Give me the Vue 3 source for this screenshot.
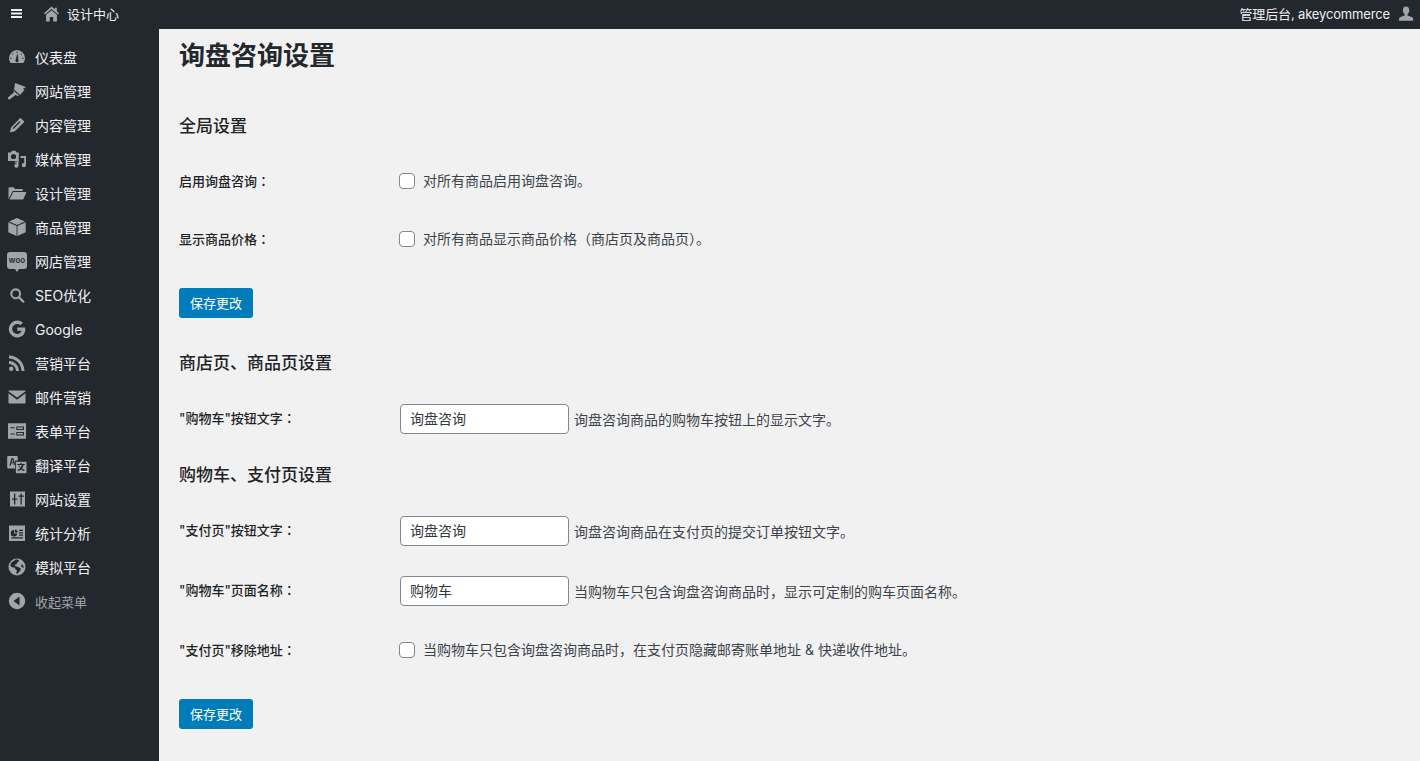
<script setup>
const menu = [
  { t: '仪表盘', k: 'gauge' }, { t: '网站管理', k: 'brush' }, { t: '内容管理', k: 'pencil' },
  { t: '媒体管理', k: 'media' }, { t: '设计管理', k: 'folder' }, { t: '商品管理', k: 'box' },
  { t: '网店管理', k: 'woo' }, { t: 'SEO优化', k: 'search' }, { t: 'Google', k: 'google' },
  { t: '营销平台', k: 'rss' }, { t: '邮件营销', k: 'mail' }, { t: '表单平台', k: 'form' },
  { t: '翻译平台', k: 'translate' }, { t: '网站设置', k: 'sliders' }, { t: '统计分析', k: 'chart' },
  { t: '模拟平台', k: 'globe' }
]
const paths = {
  gauge: 'M10 3a8.200 8.200 0 0 0-8 8.300c0 1.900.6 3.400 1.700 4.800h12.600a8 8 0 0 0 1.700-4.800A8.200 8.200 0 0 0 10 3zM10 4.600a.7.700 0 1 1 0 1.400.7.700 0 0 1 0-1.400zM5.700 6.400a.7.700 0 1 1 0 1.400.7.700 0 0 1 0-1.400zM14.300 6.400a.7.700 0 1 1 0 1.400.7.700 0 0 1 0-1.400zM4 10.600a.7.700 0 1 1 0 1.400.7.700 0 0 1 0-1.400zM16 10.600a.7.700 0 1 1 0 1.400.7.700 0 0 1 0-1.400zM10.800 7.500l.6 5.400a1.600 1.600 0 1 1-2.800 0l1.400-5.400z',
  brush: 'M8 2l11 4-3 2 1.500 1L13 14 7 8.500zM6.300 9.500l5.700 5-1.500.5-2-1-5.500 4.300c-1 .5-1.800.2-2-.8-.2-.9.500-1.500 1-2l4.800-4z',
  pencil: 'M13.900 3.200l2.900 2.800c.4.400.4 1 0 1.400L7.900 16.300l-4.900 1.200 1-5.100 8.900-9.200c.3-.3.700-.3 1 0zM12.600 6l-6.900 7 .9.900 6.900-7z',
  media: 'M1 3.500h3l1-1.700h3.500l1 1.700h2.300v8.500H1zM6.500 4.900a2.600 2.600 0 1 0 0 5.200 2.600 2.600 0 0 0 0-5.200zM13.500 7h5.500v9.200a2.100 2.100 0 1 1-1.800-2.100V9h-3.700zM7.800 12.800l3.700-.7v4.600a2.100 2.100 0 1 1-1.800-2.100v-1.100l-1.900.4z',
  folder: 'M1.500 16.500V5.200c0-.5.400-.9.900-.9h4.200l1.400 1.700h7c.5 0 .8.400.8.800V8H6.400c-.5 0-.9.300-1.100.7zM6.200 9h12.500c.4 0 .6.400.5.700L16.500 16c-.1.300-.4.500-.7.500H2.500z',
  box: 'M10 1l7.900 3.600L10 8 2.100 4.600zM1.300 5.300l8.300 3.600v10l-8.300-3.700zM18.700 5.300v9.900l-8.300 3.700v-10z',
  search: 'M8.700 3.300a5.500 5.500 0 0 1 4.500 8.600l3.900 3.900c.5.500.5 1.200 0 1.600-.4.400-1.100.4-1.600 0l-3.900-3.900a5.500 5.500 0 1 1-2.900-10.200zm0 2.100a3.400 3.400 0 1 0 0 6.800 3.400 3.400 0 0 0 0-6.800z',
  google: 'M10.200 8.500h7.900c.1.500.2 1 .2 1.700 0 4.800-3.200 8.200-8.100 8.200a8.400 8.400 0 1 1 5.700-14.600l-2.400 2.300A5 5 0 0 0 10.200 5a5 5 0 0 0 0 10c2.500 0 3.900-1.400 4.400-3.300h-4.400z',
  rss: 'M2 2.600c8.400 0 15.500 7 15.500 15.400h-3C14.500 11.200 8.800 5.500 2 5.500zM2 8c5.500 0 10 4.500 10 10H9c0-3.900-3.200-7-7-7zM4.200 13.600a2.200 2.200 0 1 1 0 4.400 2.200 2.200 0 0 1 0-4.400z',
  mail: 'M2.200 3.500h15.600c.6 0 .9.600.5 1L10 10.600 1.700 4.500c-.4-.4-.1-1 .5-1zM1.500 6.300L10 12.700l8.500-6.400v9.200c0 .6-.4 1-1 1h-15c-.6 0-1-.4-1-1z',
  form: 'M1 2.300h18v15.400H1zM3.300 6.200v1.100h4.500V6.200zM9.300 5.400v3.700h7.700V5.400zM10.300 6.400h5.600v1.700h-5.600zM3.300 12.400v1.100h4.500v-1.100zM9.300 10.900v3.700h7.700v-3.700zM10.300 11.900h5.600v1.700h-5.600z',
  sliders: 'M3 2.500h15v15H3zM7 4.500v5H5v1.300h2v4.700h1.300v-4.700h2V9.500h-2v-5zM13.500 4.500v2h-2v1.300h2v7.700h1.300V7.800h2V6.500h-2v-2z',
  chart: 'M2 2.500h16v15.500H2zM7 7a3.200 3.200 0 1 0 3.200 3.400H7zM7.800 6.600v3h3a3.200 3.200 0 0 0-3-3zM12 6.800h4v1.200h-4zM12 9.200h4v1.200h-4zM4.500 14.300h11.500v1.200H4.500zM12 11.600h4v1.200h-4z',
  globe: 'M10 1.500a8.500 8.500 0 1 1 0 17 8.500 8.500 0 0 1 0-17zM6.500 4.200L4 5.800 3.300 9l2.500 1.400 2 .2.600 1.700 1.600 1.100-.9 3 1.500.4 2.800-3.300.3-2.200-2.700-1.400-2.800-.8-.4-1.500 1.800-.4.700-1.900 1.200-.3.300-1.900-2.700-.8zM15.600 7.400l-1.700.6.800 2.100 2 .8c0-1.300-.4-2.500-1.100-3.500z',
  collapse: 'M10 1.800a8.200 8.200 0 1 1 0 16.400 8.200 8.200 0 0 1 0-16.400zM12.500 5.500L6.500 10l6 4.500z'
}
const sections = [
  {
    title: '全局设置',
    cls: 'first',
    save: true,
    rows: [
      { label: '启用询盘咨询', text: '对所有商品启用询盘咨询。' },
      { label: '显示商品价格', text: '对所有商品显示商品价格（商店页及商品页）。' }
    ]
  },
  {
    title: '商店页、商品页设置',
    rows: [{ label: '"购物车"按钮文字', value: '询盘咨询', text: '询盘咨询商品的购物车按钮上的显示文字。' }]
  },
  {
    title: '购物车、支付页设置',
    save: true,
    rows: [
      { label: '"支付页"按钮文字', value: '询盘咨询', text: '询盘咨询商品在支付页的提交订单按钮文字。' },
      { label: '"购物车"页面名称', value: '购物车', text: '当购物车只包含询盘咨询商品时，显示可定制的购车页面名称。' },
      { label: '"支付页"移除地址', text: '当购物车只包含询盘咨询商品时，在支付页隐藏邮寄账单地址 & 快递收件地址。' }
    ]
  }
]
</script>

<template>
  <div class="page">
    <header class="topbar">
      <div class="top-left">
        <svg class="burger" viewBox="0 0 11 9"><path d="M0 0h11v2H0zM0 3.500h11v2H0zM0 7h11v2H0z" /></svg>
        <svg class="home" viewBox="0 0 16 16"><path d="M8 0l3.500 3V1.200h2.200V5L16 7.200l-1.100 1.200L8 2.600 1.100 8.400 0 7.200zM8 4l5.800 4.900v7H9.800v-4.600H6.200v4.600H2.200v-7z" /></svg>
        <span class="site">设计中心</span>
      </div>
      <div class="top-right">
        <span class="who">管理后台, akeycommerce</span>
        <svg class="user" viewBox="0 0 16 16"><path d="M8 .6c2 0 3.300 1.500 3.300 3.600 0 1.600-.8 3.200-1.700 3.900v1.300c1.700.6 5 1.500 5.400 2.700.2.700.2 2.300.2 2.700H1c0-.4 0-2 .2-2.700.4-1.200 3.700-2.100 5.400-2.700V8.100c-.9-.7-1.700-2.300-1.700-3.900C4.900 2.100 6 .6 8 .6z" /></svg>
      </div>
    </header>
    <div class="body">
      <aside class="sidebar">
        <nav class="menu">
          <a v-for="m in menu" :key="m.t" class="item">
            <span v-if="m.k === 'woo'" class="woo">woo</span>
            <svg v-else-if="m.k === 'translate'" class="icon" viewBox="0 0 20 20">
              <path d="M1.500 1h8c.8 0 1.300.5 1.300 1.300v10c0 .8-.5 1.300-1.300 1.300h-8C.7 13.600.2 13.100.2 12.300v-10C.2 1.500.7 1 1.500 1z" />
              <path class="cut" d="M2.300 10.500L4.500 3h1.800l2 7H6.900l-.4-1.700H4.300l-.5 2.200zM4.600 7.200h1.600l-.8-2.900z" />
              <path class="cut" d="M8 5.500h12v14H8z" />
              <path d="M9.800 6.700h8.700c.6 0 1 .4 1 1v9.600c0 .6-.4 1-1 1H9.800c-.6 0-1-.4-1-1V7.700c0-.6.400-1 1-1z" />
              <path class="cut" d="M13.500 8h1.300v1h3v1h-1.200c-.3 1.600-.9 2.700-1.700 3.600.8.600 1.700 1 2.800 1.200l-.5 1.100c-1.300-.3-2.300-.8-3.100-1.500-.9.700-1.900 1.200-3.100 1.500l-.5-1.100c1-.2 2-.6 2.700-1.200-.8-.9-1.400-2-1.700-3.600h-1.200V9h3zM12 10c.3 1.200.7 2 1.400 2.800.6-.8 1.100-1.600 1.400-2.800z" />
            </svg>
            <svg v-else class="icon" viewBox="0 0 20 20"><path fill-rule="evenodd" :d="paths[m.k]" /></svg>
            <span>{{ m.t }}</span>
          </a>
          <a class="item collapse">
            <svg class="icon" viewBox="0 0 20 20"><path fill-rule="evenodd" :d="paths.collapse" /></svg>
            <span>收起菜单</span>
          </a>
        </nav>
      </aside>
      <main class="main">
        <h1>询盘咨询设置</h1>
        <section v-for="s in sections" :key="s.title" :class="s.cls">
          <h2>{{ s.title }}</h2>
          <div v-for="r in s.rows" :key="r.label" class="row" :class="{ 'has-input': r.value }">
            <label class="label">{{ r.label }}<span class="colon">：</span></label>
            <div class="control">
              <input v-if="r.value" class="text" type="text" :value="r.value" />
              <input v-else class="check" type="checkbox" />
              <span class="desc">{{ r.text }}</span>
            </div>
          </div>
          <button v-if="s.save" class="save" type="button">保存更改</button>
        </section>
      </main>
    </div>
  </div>
</template>

<style scoped>
.page {
  --font: Inter, "Noto Sans CJK SC", sans-serif;
  display: flex;
  flex-direction: column;
  min-height: 761px;
  font-family: var(--font);
  color: #3c434a;
}
.topbar {
  height: 29px;
  box-sizing: border-box;
  background: #23272e;
  color: #f0f0f1;
  font-size: 13px;
  display: flex;
  align-items: center;
  justify-content: space-between;
  padding: 0 6px 2px 11px;
}
.top-left, .top-right { display: flex; align-items: center; }
.burger { width: 11px; height: 9px; fill: #f0f0f1; }
.home { width: 15px; height: 16px; fill: #a0a5aa; margin-left: 22px; }
.site { margin-left: 8px; }
.who { letter-spacing: -0.15px; }
.user { width: 16px; height: 16px; fill: #a0a5aa; margin-left: 8px; }
.body { display: flex; flex: 1; }
.sidebar { width: 159px; background: #23272e; flex-shrink: 0; }
.menu { display: flex; flex-direction: column; padding-top: 12px; margin-top: -1px; }
.item {
  height: 34px;
  display: flex;
  align-items: center;
  padding-left: 7px;
  color: #f0f0f1;
  font-size: 14px;
}
.icon { width: 20px; height: 20px; fill: #a0a5aa; margin-right: 8px; flex-shrink: 0; }
.cut { fill: #23272e; }
.woo {
  width: 20px;
  height: 17px;
  margin-right: 8px;
  background: #a0a5aa;
  border-radius: 3px;
  color: #23272e;
  font-size: 8px;
  font-weight: 600;
  line-height: 16px;
  text-align: center;
  position: relative;
  top: -1px;
}
.woo::after {
  content: "";
  position: absolute;
  left: 8px;
  bottom: -3px;
  border-top: 3px solid #a0a5aa;
  border-left: 2px solid transparent;
  border-right: 2px solid transparent;
}
.collapse { color: #a0a5aa; font-size: 13px; }
.main { flex: 1; padding: 10px 20px 32px; background: #f1f1f1; }
h1 {
  margin: 0;
  font-size: 26px;
  line-height: 34px;
  font-weight: 600;
  color: #23282d;
}
section { margin-top: 15px; }
section.first { margin-top: 42px; }
h2 {
  margin: 0 0 15px;
  font-size: 17px;
  line-height: 22px;
  font-weight: 500;
  color: #1d2327;
}
.row { display: flex; align-items: center; height: 58px; }
.row.has-input { height: 60px; }
.label {
  width: 220px;
  font-size: 13px;
  font-weight: 500;
  color: #1d2327;
  position: relative;
  top: -1px;
}
.colon { font-family: Inter, "Noto Sans CJK TC", sans-serif; }
.has-input .label { top: -2px; }
.desc { position: relative; top: -1px; }
.has-input .desc { top: 0; }
.control { display: flex; align-items: center; font-size: 14px; }
.text {
  width: 169px;
  height: 30px;
  box-sizing: border-box;
  margin: 0 5px 0 1px;
  padding: 0 9px 2px;
  border: 1px solid #7e8993;
  border-radius: 4px;
  background: #fff;
  color: #32373c;
  font: 14px var(--font);
}
.check {
  appearance: none;
  width: 16px;
  height: 16px;
  margin: 0 8px 0 0;
  border: 1px solid #7e8993;
  border-radius: 4px;
  background: #fff;
}
.save {
  display: block;
  margin: 20px 0 34px;
  width: 74px;
  height: 30px;
  padding: 0 0 2px;
  border: 0;
  border-radius: 3px;
  background: #007cba;
  color: #fff;
  font: 13px var(--font);
}
section:last-child .save { margin-bottom: 0; }
</style>
